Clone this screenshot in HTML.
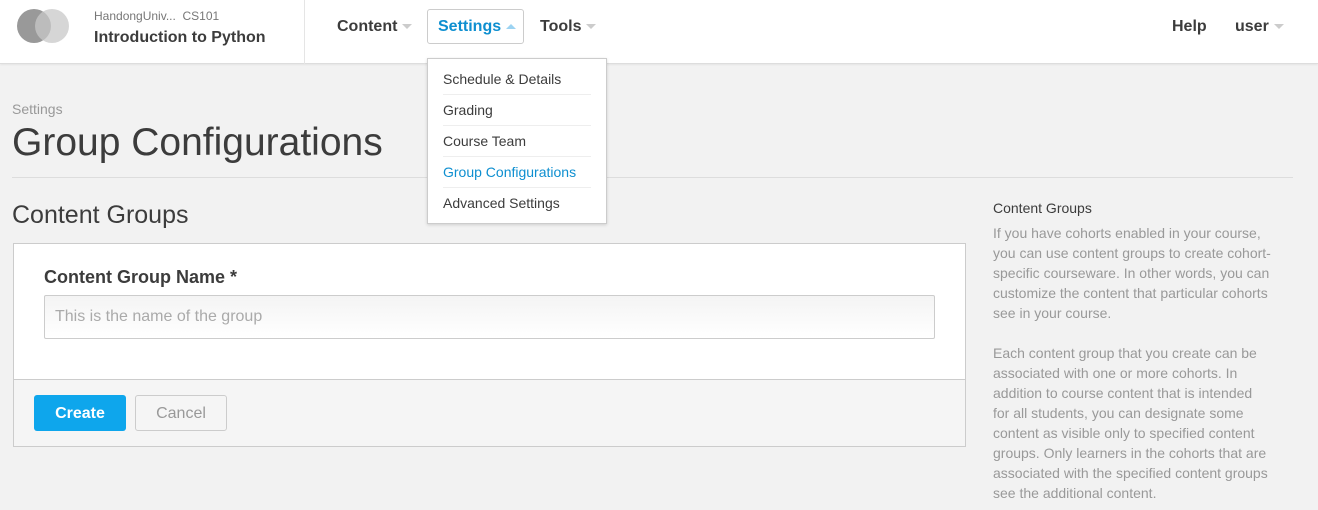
<!DOCTYPE html>
<html><head><style>
*{margin:0;padding:0;box-sizing:border-box}
body{width:1318px;height:510px;overflow:hidden;background:#f2f2f2;font-family:"Liberation Sans",sans-serif;color:#3c3c3c;position:relative}
.a{position:absolute;white-space:nowrap}
.hdr{position:absolute;left:0;top:0;width:1318px;height:64px;background:#fff;border-bottom:1px solid #ddd;box-shadow:0 1px 2px rgba(0,0,0,.06)}
.caret{display:inline-block;width:0;height:0;border-left:5px solid transparent;border-right:5px solid transparent;border-top:5px solid #ccc;margin-left:5px;vertical-align:middle}
.nav{font-size:16px;font-weight:bold;color:#3c3c3c}
.dd{position:absolute;z-index:10;left:427px;top:58px;width:180px;height:166px;background:#fff;border:1px solid #ccc;box-shadow:0 1px 3px rgba(0,0,0,.15)}
.dd div{position:absolute;left:15px;width:148px;font-size:14px;color:#3c3c3c;height:31px;line-height:31px;border-bottom:1px solid #eee}
</style></head><body>
<div class="hdr"></div>
<div class="a" style="left:17px;top:9px;width:34px;height:34px;border-radius:50%;background:#999"></div>
<div class="a" style="left:35px;top:9px;width:34px;height:34px;border-radius:50%;background:rgba(200,200,200,.75)"></div>
<div class="a" style="left:304px;top:0;width:1px;height:64px;background:#e5e5e5"></div>
<div class="a" style="left:94px;top:9px;font-size:12px;color:#777">HandongUniv...&nbsp;&nbsp;CS101</div>
<div class="a" style="left:94px;top:29px;font-size:16px;font-weight:bold;color:#3c3c3c">Introduction to Python</div>
<div class="a nav" style="left:337px;top:18px">Content<span class="caret"></span></div>
<div class="a" style="left:427px;top:9px;width:97px;height:35px;border:1px solid #ccc;border-radius:3px;background:#fff"></div>
<div class="a nav" style="left:438px;top:18px;color:#0e8fd0">Settings<span class="caret" style="border-top:0;border-bottom:5px solid #9cd3f2"></span></div>
<div class="a nav" style="left:540px;top:18px">Tools<span class="caret"></span></div>
<div class="a nav" style="left:1172px;top:18px">Help</div>
<div class="a nav" style="left:1235px;top:18px">user<span class="caret"></span></div>
<div class="dd">
<div style="top:5px">Schedule &amp; Details</div>
<div style="top:36px">Grading</div>
<div style="top:67px">Course Team</div>
<div style="top:98px;color:#0e8fd0">Group Configurations</div>
<div style="top:129px;border:0">Advanced Settings</div>
</div>
<div class="a" style="left:12px;top:101px;font-size:14px;color:#999">Settings</div>
<div class="a" style="left:12px;top:121px;font-size:39px;color:#3c3c3c">Group Configurations</div>
<div class="a" style="left:12px;top:177px;width:1281px;height:1px;background:#ddd"></div>
<div class="a" style="left:12px;top:201px;font-size:25px;color:#3c3c3c">Content Groups</div>
<div class="a" style="left:13px;top:243px;width:953px;height:204px;background:#f5f5f5;border:1px solid #ccc"></div>
<div class="a" style="left:14px;top:244px;width:951px;height:136px;background:#fff;border-bottom:1px solid #ccc"></div>
<div class="a" style="left:44px;top:267px;font-size:18px;font-weight:bold;color:#3c3c3c">Content Group Name *</div>
<div class="a" style="left:44px;top:295px;width:891px;height:44px;border:1px solid #ccc;border-radius:2px;background:linear-gradient(#f4f4f4,#fff)"></div>
<div class="a" style="left:55px;top:308px;font-size:16px;color:#aaa">This is the name of the group</div>
<div class="a" style="left:34px;top:395px;width:92px;height:36px;background:#0ea6ec;border-radius:3px;color:#fff;font-size:16px;font-weight:bold;text-align:center;line-height:37px">Create</div>
<div class="a" style="left:135px;top:395px;width:92px;height:36px;border:1px solid #ccc;border-radius:3px;color:#999;font-size:16px;text-align:center;line-height:36px">Cancel</div>
<div class="a" style="left:993px;top:200px;font-size:14px;color:#3c3c3c">Content Groups</div>
<div class="a" style="left:993px;top:223px;font-size:14px;line-height:20px;color:#999">If you have cohorts enabled in your course,<br>you can use content groups to create cohort-<br>specific courseware. In other words, you can<br>customize the content that particular cohorts<br>see in your course.<br><br>Each content group that you create can be<br>associated with one or more cohorts. In<br>addition to course content that is intended<br>for all students, you can designate some<br>content as visible only to specified content<br>groups. Only learners in the cohorts that are<br>associated with the specified content groups<br>see the additional content.</div>
</body></html>
